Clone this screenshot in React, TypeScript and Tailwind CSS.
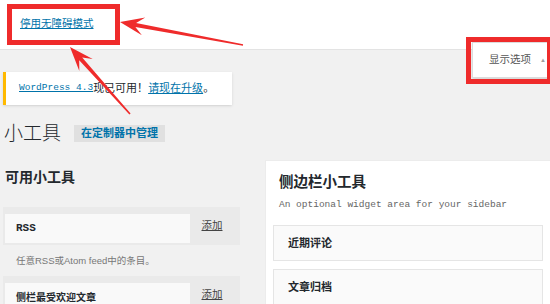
import React from 'react';

const sans = "font-['Liberation_Sans','Noto_Sans_CJK_SC',sans-serif]";
const mono = "font-['Liberation_Mono','Noto_Sans_CJK_SC',monospace]";

const availableWidgets = [
  { title: 'RSS', desc: '任意RSS或Atom feed中的条目。', isMono: true },
  { title: '侧栏最受欢迎文章', desc: '', isMono: false },
];

const sidebarWidgets = ['近期评论', '文章归档'];

const App: React.FC = () => {
  return (
    <div className={`relative w-[550px] h-[304px] overflow-hidden bg-[#f1f1f1] text-[#23282d] ${sans}`}>
      {/* Header bar */}
      <div className="h-[50px] bg-white border-b border-[#e3e3e3] flex items-center pl-[20px] pb-[3px]">
        <a className="text-[10.5px] text-[#0073aa] underline leading-none">停用无障碍模式</a>
      </div>

      {/* Screen options tab */}
      <div className="absolute left-[472px] top-[42px] w-[80px] h-[36px] bg-white border border-[#dcdcdc] shadow-sm flex items-center pl-[16px] gap-[9px]">
        <span className="text-[10.5px] text-[#555]">显示选项</span>
        <span className="text-[6px] text-[#a0a0a0]">▲</span>
      </div>

      {/* Update notice */}
      <div className="mt-[22px] ml-[3px] w-[229px] h-[33px] bg-white border-l-[3px] border-[#ffb900] shadow-sm flex items-center pl-[13px] pb-[1px]">
        <a className={`text-[9.5px] text-[#0073aa] underline ${mono}`}>WordPress 4.3</a>
        <span className="text-[11px]">现已可用！</span>
        <a className="text-[11px] text-[#0073aa] underline">请现在升级</a>
        <span className="text-[11px]">。</span>
      </div>

      {/* Page title */}
      <div className="mt-[16px] ml-[4px] h-[24px] flex items-center gap-[13px]">
        <h1 className="text-[19px] font-light leading-none text-[#23282d]">小工具</h1>
        <button className="h-[17px] px-[7px] bg-[#e0e0e0] text-[11px] font-bold text-[#0073aa] leading-none">在定制器中管理</button>
      </div>

      {/* Columns */}
      <div className="mt-[15px] flex">
        <div className="w-[240px] pl-[3px] shrink-0">
          <h2 className="pt-[7px] pl-[2px] h-[27px] text-[14px] font-bold leading-[20px]">可用小工具</h2>
          <div className="mt-[20px]">
            {availableWidgets.map((w) => (
              <div key={w.title}>
                <div className="h-[38px] bg-[#eaeaea] flex items-end pl-[2px] pb-[2px]">
                  <div className="w-[185px] h-[29px] bg-[#f9f9f9] flex items-center pl-[11px]">
                    <span className={w.isMono ? `text-[11px] font-bold ${mono}` : 'text-[10px] font-bold'}>{w.title}</span>
                  </div>
                  <div className="flex-1 h-full flex items-center justify-center pr-[6px] pt-[2px]">
                    <a className="text-[10.5px] text-[#444] underline">添加</a>
                  </div>
                </div>
                {w.desc && (
                  <div className="h-[31px] flex items-center pl-[13px] pt-[2px] text-[9.5px] text-[#777]">{w.desc}</div>
                )}
              </div>
            ))}
          </div>
        </div>

        <div className="ml-[25px] flex-1 h-[160px] bg-white border-l border-t border-[#ececec] px-[7px]">
          <h3 className="pt-[11px] pl-[6px] text-[14.5px] font-bold leading-[20px]">侧边栏小工具</h3>
          <p className={`mt-[6px] pl-[6px] text-[9.5px] leading-[14px] text-[#666] ${mono}`}>An optional widget area for your sidebar</p>
          <div className="mt-[13px] flex flex-col gap-[8px]">
            {sidebarWidgets.map((name) => (
              <div key={name} className="h-[36px] bg-[#fafafa] border border-[#e5e5e5] flex items-center pl-[14px]">
                <span className="text-[11px] font-bold">{name}</span>
              </div>
            ))}
          </div>
        </div>
      </div>

      {/* Annotation overlay */}
      <div className="absolute left-[7px] top-[4px] w-[113px] h-[41px] border-[5px] border-[#ef2b2b]" />
      <div className="absolute left-[466px] top-[37px] w-[86px] h-[47px] border-[5px] border-[#ef2b2b]" />
      <svg className="absolute left-0 top-0" width="550" height="304" viewBox="0 0 550 304">
        <polygon
          fill="#ef2b2b"
          points="120,22 145.3,17.6 136.1,22.9 243.1,44.3 242.9,45.7 135.4,26.9 141.9,35.3"
        />
        <polygon
          fill="#ef2b2b"
          points="70,47 92.7,58.9 82.2,57.6 130.6,113.6 129.4,114.4 79.2,60.2 79.3,70.9"
        />
      </svg>
    </div>
  );
};

export default App;
